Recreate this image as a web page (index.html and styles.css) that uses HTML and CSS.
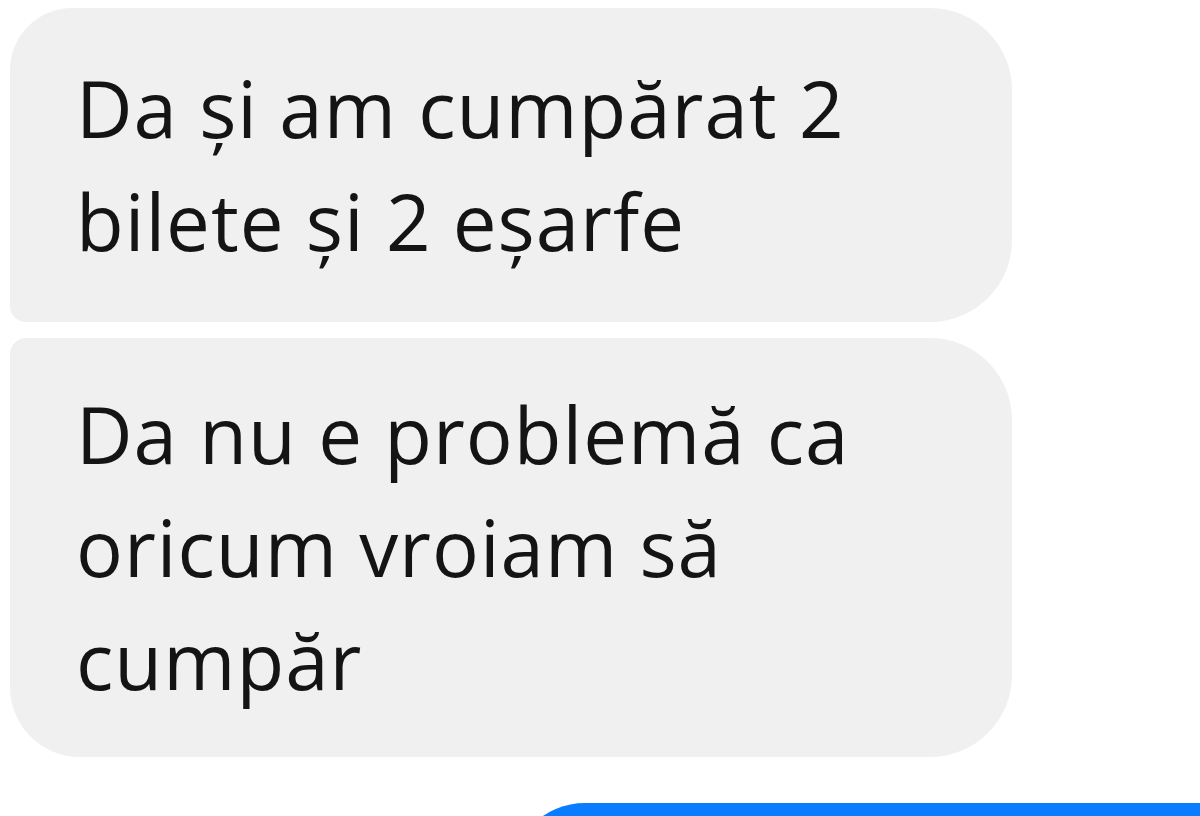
FILE: index.html
```html
<!DOCTYPE html>
<html lang="ro">
<head>
<meta charset="utf-8">
<link rel="stylesheet" href="styles.css">
</head>
<body>
<div class="thread">
  <div class="bubble first">Da și am cumpărat 2<br>bilete și 2 eșarfe</div>
  <div class="bubble last">Da nu e problemă ca<br>oricum vroiam să<br>cumpăr</div>
  <div class="bubble mine"></div>
</div>
</body>
</html>
```
FILE: styles.css
```css
html, body {
  margin: 0;
  padding: 0;
  background: #ffffff;
  overflow: hidden;
  height: 816px;
}
.thread {
  display: flex;
  flex-direction: column;
  gap: 16px;
  padding: 8px 0 0 10px;
}
.bubble {
  box-sizing: border-box;
  width: 1002px;
  background: #f0f0f0;
  color: #141414;
  font-family: "Open Sans", "Noto Sans", sans-serif;
  font-size: 78px;
  letter-spacing: 1px;
  line-height: 113px;
  padding: 44px 40px 44px 66px;
}
.first {
  border-radius: 62px 82px 82px 16px;
}
.last {
  padding-top: 40px;
  padding-bottom: 40px;
  border-radius: 16px 82px 82px 70px;
}
.mine {
  margin-top: 30px;
  margin-left: 500px;
  width: 740px;
  height: 120px;
  padding: 0;
  background: #0a7cff;
  border-radius: 75px 0 0 0;
}
```
